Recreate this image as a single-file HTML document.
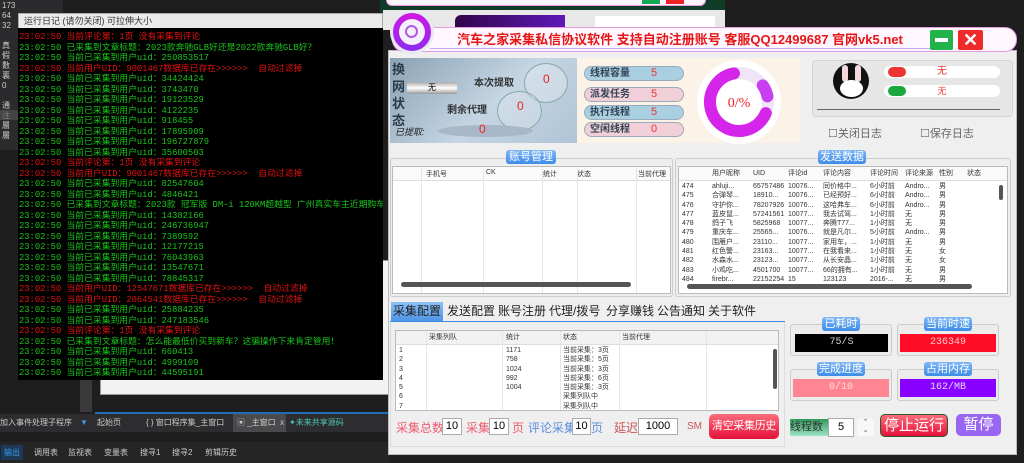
<!DOCTYPE html>
<html><head><meta charset="utf-8"><style>
*{margin:0;padding:0;box-sizing:border-box}
body{width:1024px;height:463px;overflow:hidden;background:#1e1e1e;position:relative;font-family:"Liberation Sans","Noto Sans CJK SC",sans-serif}
.a{position:absolute}
.log{position:absolute;left:18px;top:28px;width:365px;height:352px;background:#000;overflow:hidden;font-family:"Liberation Mono","Noto Sans CJK SC",monospace;font-size:8.8px;line-height:10.5px;white-space:nowrap;padding-left:1px;padding-top:4px}
.g{color:#1bc41b}.r{color:#e01212}
.t{font-size:9px;color:#333}
.pill{position:absolute;left:584px;width:100px;height:15px;border-radius:8px;border:1px solid #9ab;font-size:10px;font-weight:bold;color:#345;padding-left:5px;line-height:13px}
.pill b{position:absolute;left:66px;color:#e33;font-weight:normal;font-size:11px}
.gb{position:absolute;border:1px solid #ccc;border-radius:3px;background:#eee}
.ttl{position:absolute;background:linear-gradient(#7fb6f5,#3d8ce8);color:#fff;font-size:11px;text-align:center;border-radius:3px;line-height:14px;white-space:nowrap}
.lst{position:absolute;background:#fff;border:1px solid #bbb;overflow:hidden;font-size:7px;color:#333}
.hd{position:absolute;left:0;right:0;top:0;height:14px;background:#fafafa;border-bottom:1px solid #ddd}
.c{position:absolute;white-space:nowrap}
.vl{position:absolute;top:0;bottom:0;width:1px;background:#e6e6e6}
.disp{position:absolute;height:18px;font-size:10px;text-align:center;line-height:18px;font-family:"Liberation Mono",monospace}
.tab{position:absolute;top:302px;height:19px;font-size:12px;line-height:19px;color:#222;white-space:nowrap}
.inp{position:absolute;background:#fff;border:1px solid #aaa;font-size:11px;text-align:center;height:17px;line-height:15px}
.lbl{position:absolute;font-size:12px;top:419px;white-space:nowrap}
</style></head><body>
<!-- left IDE column -->
<div class="a" style="left:0;top:0;width:18px;height:150px;background:#2b2b2d"></div>
<div class="a" style="left:18px;top:0;width:45px;height:14px;background:#2b2b2d"></div>
<div class="a" style="left:2px;top:1px;color:#ccc;font-size:8px;line-height:10px">173<br>64<br>32<br><br>真<br>假<br>數<br>裏<br>0<br><br>通<br>注<br>層<br>層</div>
<div class="a" style="left:0;top:110px;width:18px;height:10px;background:#555;opacity:.6"></div>
<!-- top background windows -->
<div class="a" style="left:380px;top:0;width:345px;height:14px;background:#0f3b27"></div>
<div class="a" style="left:386px;top:0;width:320px;height:6px;background:#fdf3fb;border:1px solid #e89be0;border-top:none;border-radius:0 0 6px 6px"></div>
<div class="a" style="left:642px;top:0;width:18px;height:4px;background:#1a5"></div>
<div class="a" style="left:666px;top:0;width:18px;height:4px;background:#e22"></div>
<div class="a" style="left:383px;top:10px;width:342px;height:20px;background:#e8e8e8"></div>
<div class="a" style="left:455px;top:15px;width:110px;height:12px;background:linear-gradient(90deg,#31054a,#5e18b8);border-radius:6px 0 0 0"></div>
<div class="a" style="left:595px;top:16px;width:120px;height:12px;background:#fff"></div>
<!-- log window -->
<div class="a" style="left:100px;top:260px;width:290px;height:135px;background:#f2f2f2;border:1px solid #999"></div>
<div class="a" style="left:18px;top:13px;width:365px;height:16px;background:#ebebeb;border:1px solid #aaa;font-size:9px;line-height:14px;padding-left:5px;color:#333">运行日记 (请勿关闭) 可拉伸大小</div>
<div class="log">
<div class="r">23:02:50 当前评论第：1页 没有采集到评论</div>
<div class="g">23:02:50 已采集到文章标题：2023款奔驰GLB好还是2022款奔驰GLB好？</div>
<div class="g">23:02:50 当前已采集到用户uid：250853517</div>
<div class="r">23:02:50 当前用户UID：9001467数据库已存在&gt;&gt;&gt;&gt;&gt;&gt;&nbsp; 自动过滤掉</div>
<div class="g">23:02:50 当前已采集到用户uid：34424424</div>
<div class="g">23:02:50 当前已采集到用户uid：3743470</div>
<div class="g">23:02:50 当前已采集到用户uid：19123529</div>
<div class="g">23:02:50 当前已采集到用户uid：4122235</div>
<div class="g">23:02:50 当前已采集到用户uid：918455</div>
<div class="g">23:02:50 当前已采集到用户uid：17895909</div>
<div class="g">23:02:50 当前已采集到用户uid：196727879</div>
<div class="g">23:02:50 当前已采集到用户uid：35600503</div>
<div class="r">23:02:50 当前评论第：1页 没有采集到评论</div>
<div class="r">23:02:50 当前用户UID：9001467数据库已存在&gt;&gt;&gt;&gt;&gt;&gt;&nbsp; 自动过滤掉</div>
<div class="g">23:02:50 当前已采集到用户uid：82547604</div>
<div class="g">23:02:50 当前已采集到用户uid：4846421</div>
<div class="g">23:02:50 已采集到文章标题：2023款 冠军版 DM-i 120KM超越型 广州真实车主近期购车</div>
<div class="g">23:02:50 当前已采集到用户uid：14382166</div>
<div class="g">23:02:50 当前已采集到用户uid：246736947</div>
<div class="g">23:02:50 当前已采集到用户uid：7389592</div>
<div class="g">23:02:50 当前已采集到用户uid：12177215</div>
<div class="g">23:02:50 当前已采集到用户uid：76043963</div>
<div class="g">23:02:50 当前已采集到用户uid：13547671</div>
<div class="g">23:02:50 当前已采集到用户uid：78845317</div>
<div class="r">23:02:50 当前用户UID：12547671数据库已存在&gt;&gt;&gt;&gt;&gt;&gt;&nbsp; 自动过滤掉</div>
<div class="r">23:02:50 当前用户UID：2064541数据库已存在&gt;&gt;&gt;&gt;&gt;&gt;&nbsp; 自动过滤掉</div>
<div class="g">23:02:50 当前已采集到用户uid：25884235</div>
<div class="g">23:02:50 当前已采集到用户uid：247183546</div>
<div class="r">23:02:50 当前评论第：1页 没有采集到评论</div>
<div class="g">23:02:50 已采集到文章标题：怎么能最低价买到新车？这骗操作下来肯定管用！</div>
<div class="g">23:02:50 当前已采集到用户uid：660413</div>
<div class="g">23:02:50 当前已采集到用户uid：4999109</div>
<div class="g">23:02:50 当前已采集到用户uid：44595191</div>
</div>
<!-- IDE bottom -->
<div class="a" style="left:80px;top:380px;width:12px;height:32px;background:#3a3a3c"></div>
<div class="a" style="left:95px;top:412px;width:295px;height:2px;background:#1f6fb5"></div>
<div class="a" style="left:0;top:414px;width:390px;height:18px;background:#2d2d30;font-size:8px;color:#ccc;line-height:18px">
<span class="a" style="left:0">加入事件处理子程序</span><span class="a" style="left:80px;color:#3b9be8">▼</span>
<span class="a" style="left:97px">起始页</span><span class="a" style="left:146px">{ } 窗口程序集_主窗口</span>
<span class="a" style="left:233px;width:53px;background:#4a4a4d;padding-left:4px">▣ _主窗口&nbsp; x</span>
<span class="a" style="left:289px;color:#4cc3b0">✦未来共享源码</span></div>
<div class="a" style="left:0;top:442px;width:390px;height:21px;background:#252526;font-size:8px;color:#ccc;line-height:21px">
<span class="a" style="left:1px;top:3px;line-height:15px;padding:0 3px;background:#1c3a58;color:#3b9be8">输出</span>
<span class="a" style="left:34px">调用表</span><span class="a" style="left:68px">监视表</span><span class="a" style="left:104px">变量表</span><span class="a" style="left:140px">搜寻1</span><span class="a" style="left:172px">搜寻2</span><span class="a" style="left:205px">剪辑历史</span></div>
<!-- MAIN WINDOW -->
<div class="a" style="left:388px;top:50px;width:629px;height:405px;background:#efefef;border:1px solid #bbb"></div>
<div class="a" style="left:392px;top:27px;width:625px;height:25px;background:#fff7fd;border:1px solid #e59ae0;border-radius:12px"></div>
<div class="a" style="left:430px;top:48px;width:500px;height:1px;background:#c9a6e8"></div>
<div class="a" style="left:390px;top:10px;width:44px;height:44px;border-radius:50%;background:conic-gradient(#d218e0,#8b2af0,#d218e0);border:3px solid #e8e8f0"></div>
<div class="a" style="left:399px;top:19px;width:26px;height:26px;border-radius:50%;background:#f5f0fb"></div>
<div class="a" style="left:405px;top:25px;width:13px;height:13px;border-radius:50%;border:2px solid #b05be0"></div>
<div class="a" style="left:440px;top:31px;width:480px;text-align:center;color:#e51515;font-weight:bold;font-size:13px;line-height:17px;white-space:nowrap">汽车之家采集私信协议软件 支持自动注册账号 客服QQ12499687 官网vk5.net</div>
<div class="a" style="left:930px;top:30px;width:23px;height:20px;background:#21b34a;border-radius:2px"><div class="a" style="left:5px;top:8px;width:13px;height:4px;background:#fff"></div></div>
<div class="a" style="left:958px;top:30px;width:25px;height:20px;background:#ee2a2a;border-radius:2px;color:#fff;font-size:18px;font-weight:bold;text-align:center;line-height:20px">✕</div>
<!-- top left panel -->
<div class="a" style="left:390px;top:58px;width:187px;height:85px;background:linear-gradient(135deg,#8aa2b4,#c5d5e3 55%,#b0c4d6)"></div>
<div class="a" style="left:392px;top:61px;width:14px;font-size:13px;font-weight:bold;color:#2c3a48;line-height:17px">换网状态</div>
<div class="a" style="left:407px;top:82px;width:50px;height:12px;background:linear-gradient(#aaa,#fff,#999);font-size:8px;text-align:center;line-height:12px">无</div>
<div class="a" style="left:524px;top:63px;width:44px;height:40px;border-radius:50%;border:1px solid #8aa;background:rgba(255,255,255,.25)"></div>
<div class="a" style="left:497px;top:91px;width:45px;height:40px;border-radius:50%;border:1px solid #8aa;background:rgba(255,255,255,.2)"></div>
<div class="a" style="left:474px;top:74px;font-size:10px;font-weight:bold;color:#333">本次提取</div>
<div class="a" style="left:543px;top:72px;font-size:12px;color:#e22">0</div>
<div class="a" style="left:447px;top:101px;font-size:10px;font-weight:bold;color:#333">剩余代理</div>
<div class="a" style="left:517px;top:99px;font-size:12px;color:#e22">0</div>
<div class="a" style="left:438px;top:125px;width:95px;height:12px;border-radius:50%;background:#a8b8c8"></div>
<div class="a" style="left:395px;top:125px;font-size:9px;color:#222;font-style:italic">已提取:</div>
<div class="a" style="left:479px;top:122px;font-size:12px;color:#e22">0</div>
<!-- middle -->
<div class="a" style="left:577px;top:58px;width:223px;height:85px;background:#fbf3e7"></div>
<div class="pill" style="top:66px;background:#a9cfe0">线程容量<b>5</b></div>
<div class="pill" style="top:87px;background:#f1cfd8">派发任务<b>5</b></div>
<div class="pill" style="top:105px;background:#a9cfe0">执行线程<b>5</b></div>
<div class="pill" style="top:122px;background:#f1cfd8">空闲线程<b>0</b></div>
<svg class="a" style="left:697px;top:60px" width="84" height="84" viewBox="0 0 84 84">
<circle cx="42" cy="42" r="42" fill="#fff"/>
<circle cx="42" cy="42" r="29" fill="none" stroke="#f0e4f8" stroke-width="12"/>
<circle cx="42" cy="42" r="29" fill="none" stroke="#d625ea" stroke-width="12" stroke-linecap="round" stroke-dasharray="120 200" transform="rotate(-100 42 42) scale(1,-1) translate(0,-84)"/>
<circle cx="42" cy="42" r="29" fill="none" stroke="#c73ff0" stroke-width="12" stroke-linecap="round" stroke-dasharray="12 200" transform="rotate(-35 42 42)"/>
<text x="42" y="47" text-anchor="middle" font-size="14" fill="#e22" font-family="Liberation Serif,serif">0/%</text>
</svg>
<!-- right top panel -->
<div class="a" style="left:812px;top:60px;width:201px;height:57px;background:#e6e6e6;border:1px solid #d4d4d4;border-radius:4px"></div>
<div class="a" style="left:833px;top:63px;width:36px;height:36px;border-radius:50%;background:#111"></div>
<div class="a" style="left:842px;top:65px;width:6px;height:17px;border-radius:3px;background:#f4d8dc"></div>
<div class="a" style="left:855px;top:65px;width:6px;height:17px;border-radius:3px;background:#f4d8dc"></div>
<div class="a" style="left:840px;top:80px;width:23px;height:17px;border-radius:50%;background:#fff"></div>
<div class="a" style="left:884px;top:66px;width:116px;height:12px;background:#fff;border-radius:6px;font-size:10px;color:#e33;text-align:center;line-height:12px">无</div>
<div class="a" style="left:888px;top:67px;width:18px;height:10px;background:#e33;border-radius:5px"></div>
<div class="a" style="left:884px;top:85px;width:116px;height:12px;background:#fff;border-radius:6px;font-size:9px;color:#e33;text-align:center;line-height:12px">无</div>
<div class="a" style="left:888px;top:86px;width:18px;height:10px;background:#1aa83c;border-radius:5px"></div>
<div class="a" style="left:817px;top:109px;width:183px;height:1px;background:#666"></div>
<div class="a" style="left:828px;top:125px;font-size:11px;color:#666">☐关闭日志</div>
<div class="a" style="left:920px;top:125px;font-size:11px;color:#666">☐保存日志</div>
<!-- group boxes -->
<div class="gb" style="left:390px;top:158px;width:283px;height:139px"></div>
<div class="ttl" style="left:506px;top:150px;width:50px">账号管理</div>
<div class="lst" style="left:392px;top:166px;width:279px;height:128px">
<div class="hd"></div>
<span class="c" style="left:33px;top:2px">手机号</span><span class="c" style="left:93px;top:2px">CK</span><span class="c" style="left:150px;top:2px">统计</span><span class="c" style="left:184px;top:2px">状态</span><span class="c" style="left:245px;top:2px">当前代理</span>
<div class="vl" style="left:28px"></div><div class="vl" style="left:90px"></div><div class="vl" style="left:149px"></div><div class="vl" style="left:184px"></div><div class="vl" style="left:243px"></div>
<div class="a" style="left:8px;top:115px;width:230px;height:5px;background:#555;border-radius:3px"></div>
</div>
<div class="gb" style="left:675px;top:158px;width:336px;height:139px"></div>
<div class="ttl" style="left:818px;top:150px;width:48px">发送数据</div>
<div class="lst" style="left:678px;top:166px;width:330px;height:128px;line-height:9.3px">
<div class="hd"></div>
<span class="c" style="left:33px;top:2px">用户昵称</span><span class="c" style="left:74px;top:2px">UID</span><span class="c" style="left:109px;top:2px">评论id</span><span class="c" style="left:144px;top:2px">评论内容</span><span class="c" style="left:191px;top:2px">评论时间</span><span class="c" style="left:226px;top:2px">评论来源</span><span class="c" style="left:260px;top:2px">性别</span><span class="c" style="left:288px;top:2px">状态</span>
<div class="c" style="left:3px;top:15px">474<br>475<br>476<br>477<br>478<br>479<br>480<br>481<br>482<br>483<br>484</div>
<div class="c" style="left:33px;top:15px">ahluji...<br>合弹琴...<br>守护你...<br>蓝皮鼠...<br>鸽子飞<br>重庆车...<br>围雁户...<br>红色警...<br>水森水...<br>小鸡吃...<br>firebr...</div>
<div class="c" style="left:74px;top:15px">65757486<br>18910...<br>78207926<br>57241561<br>5825968<br>25565...<br>23110...<br>23163...<br>23123...<br>4501700<br>22152254</div>
<div class="c" style="left:109px;top:15px">10076...<br>10076...<br>10076...<br>10077...<br>10077...<br>10076...<br>10077...<br>10077...<br>10077...<br>10077...<br>15</div>
<div class="c" style="left:144px;top:15px">同价格中...<br>已经预好...<br>这哈弗车...<br>我去试驾...<br>奔腾T77...<br>就是凡尔...<br>家用车，...<br>在我看来...<br>从长安晶...<br>66的拥有...<br>123123</div>
<div class="c" style="left:191px;top:15px">6小时前<br>6小时前<br>6小时前<br>1小时前<br>1小时前<br>5小时前<br>1小时前<br>1小时前<br>1小时前<br>1小时前<br>2016-...</div>
<div class="c" style="left:226px;top:15px">Andro...<br>Andro...<br>Andro...<br>无<br>无<br>Andro...<br>无<br>无<br>无<br>无<br>无</div>
<div class="c" style="left:260px;top:15px">男<br>男<br>男<br>男<br>男<br>男<br>男<br>女<br>女<br>男<br>男</div>
<div class="a" style="left:320px;top:18px;width:4px;height:15px;background:#555;border-radius:2px"></div>
<div class="a" style="left:8px;top:117px;width:285px;height:5px;background:#555;border-radius:3px"></div>
</div>
<!-- tabs -->
<div class="tab" style="left:391px;width:52px;background:linear-gradient(#8cc0f7,#4d95e6);text-align:center">采集配置</div>
<div class="tab" style="left:447px">发送配置</div><div class="tab" style="left:498px">账号注册</div><div class="tab" style="left:549px">代理/拨号</div><div class="tab" style="left:606px">分享赚钱</div><div class="tab" style="left:657px">公告通知</div><div class="tab" style="left:708px">关于软件</div>
<div class="a" style="left:390px;top:321px;width:395px;height:1px;background:#3b8ae6"></div>
<div class="a" style="left:390px;top:322px;width:395px;height:125px;border:1px solid #ddd;border-top:none"></div>
<div class="lst" style="left:395px;top:330px;width:384px;height:81px;line-height:9.3px">
<div class="hd" style="background:#f2f2f2"></div>
<span class="c" style="left:33px;top:2px">采集列队</span><span class="c" style="left:110px;top:2px">统计</span><span class="c" style="left:167px;top:2px">状态</span><span class="c" style="left:226px;top:2px">当前代理</span>
<div class="vl" style="left:30px"></div><div class="vl" style="left:106px"></div><div class="vl" style="left:164px"></div><div class="vl" style="left:223px"></div><div class="vl" style="left:310px"></div>
<div class="c" style="left:3px;top:15px">1<br>2<br>3<br>4<br>5<br>6<br>7</div>
<div class="c" style="left:110px;top:15px">1171<br>758<br>1024<br>992<br>1004</div>
<div class="c" style="left:167px;top:15px">当前采集：3页<br>当前采集：5页<br>当前采集：3页<br>当前采集：6页<br>当前采集：3页<br>采集列队中<br>采集列队中</div>
<div class="a" style="left:377px;top:18px;width:4px;height:40px;background:#555;border-radius:2px"></div>
</div>
<!-- bottom controls -->
<div class="lbl" style="left:396px;color:#f05a6e">采集总数</div>
<div class="inp" style="left:442px;top:418px;width:20px">10</div>
<div class="lbl" style="left:466px;color:#f05a6e">采集</div>
<div class="inp" style="left:489px;top:418px;width:20px">10</div>
<div class="lbl" style="left:512px;color:#f05a6e">页</div>
<div class="lbl" style="left:528px;color:#5b8ee0">评论采集</div>
<div class="inp" style="left:572px;top:418px;width:19px">10</div>
<div class="lbl" style="left:591px;color:#5b8ee0">页</div>
<div class="lbl" style="left:614px;color:#c55">延迟</div>
<div class="inp" style="left:638px;top:418px;width:40px">1000</div>
<div class="lbl" style="left:687px;color:#c55;font-size:10px;top:421px">SM</div>
<div class="a" style="left:709px;top:414px;width:70px;height:25px;border-radius:5px;background:linear-gradient(#fb6d7b,#e8103a);color:#fff;font-size:11px;text-align:center;line-height:25px;white-space:nowrap;letter-spacing:-0.3px">清空采集历史</div>
<!-- stats -->
<div class="gb" style="left:790px;top:324px;width:102px;height:32px;background:#ececec"></div>
<div class="ttl" style="left:822px;top:317px;width:38px">已耗时</div>
<div class="disp" style="left:795px;top:334px;width:93px;background:#000;color:#ccc">75/S</div>
<div class="gb" style="left:897px;top:324px;width:102px;height:32px;background:#ececec"></div>
<div class="ttl" style="left:924px;top:317px;width:48px">当前时速</div>
<div class="disp" style="left:900px;top:334px;width:96px;background:#ff0c26;color:#fcc">236349</div>
<div class="gb" style="left:790px;top:369px;width:102px;height:32px;background:#ececec"></div>
<div class="ttl" style="left:817px;top:362px;width:48px">完成进度</div>
<div class="disp" style="left:793px;top:379px;width:96px;background:#ff8593;color:#fdd">0/10</div>
<div class="gb" style="left:897px;top:369px;width:102px;height:32px;background:#ececec"></div>
<div class="ttl" style="left:924px;top:362px;width:48px">占用内存</div>
<div class="disp" style="left:900px;top:379px;width:96px;background:#8800ff;color:#e6d6ff">162/MB</div>
<div class="a" style="left:790px;top:419px;width:38px;height:17px;background:linear-gradient(#2f9a5a,#9fe3c8);font-size:11px;color:#333;line-height:17px;white-space:nowrap;overflow:hidden">线程数</div>
<div class="inp" style="left:828px;top:418px;width:26px;height:19px;line-height:17px">5</div>
<div class="a" style="left:857px;top:419px;width:17px;height:17px;font-size:7px;color:#555;text-align:center;line-height:8px;background:#f8f8f8">⌃<br>⌄</div>
<div class="a" style="left:880px;top:414px;width:68px;height:23px;border-radius:5px;background:linear-gradient(#fb6d7b,#e8103a);color:#fff;font-size:15px;text-align:center;line-height:21px;border:1px solid #2a5a2a;white-space:nowrap">停止运行</div>
<div class="a" style="left:956px;top:414px;width:45px;height:22px;border-radius:5px;background:#9966f3;color:#fff;font-size:15px;text-align:center;line-height:22px">暂停</div>
</body></html>
